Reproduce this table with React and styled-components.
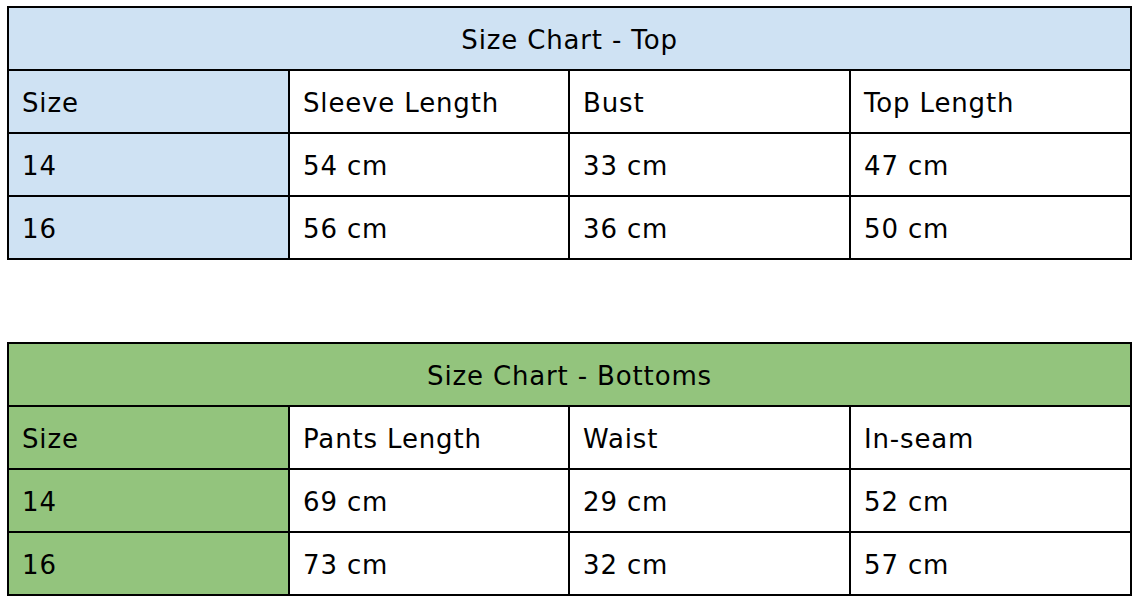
import React from "react";
import styled, { createGlobalStyle } from "styled-components";

const Global = createGlobalStyle`
  html, body { margin: 0; padding: 0; background: #fff; }
  body { font-family: "DejaVu Sans", Verdana, sans-serif; color: #000; }
`;

const Page = styled.div`
  padding: 6px 8px 0 7px;
  display: flex;
  flex-direction: column;
  gap: 82px;
`;

const Table = styled.table`
  width: 1125px;
  border-collapse: separate;
  border-spacing: 0;
  table-layout: fixed;
  border-left: 2px solid #000;
  border-top: 2px solid #000;
`;

const Col = styled.col`
  width: ${(p) => p.$w}px;
`;

const Cell = styled.td`
  box-sizing: border-box;
  height: 63px;
  padding: 3px 0 0 13px;
  border-right: 2px solid #000;
  border-bottom: 2px solid #000;
  background: ${(p) => p.$bg || "#fff"};
  font-size: 26px;
  letter-spacing: 0.85px;
  line-height: 1;
  vertical-align: middle;
  white-space: nowrap;
`;

const TitleCell = styled(Cell)`
  text-align: center;
  padding: 3px 0 0 0;
`;

const colWidths = [281, 280, 281, 281];

const charts = [
  {
    title: "Size Chart - Top",
    color: "#cfe2f3",
    head: ["Sleeve Length", "Bust", "Top Length"],
    rows: [
      ["14", "54 cm", "33 cm", "47 cm"],
      ["16", "56 cm", "36 cm", "50 cm"],
    ],
  },
  {
    title: "Size Chart - Bottoms",
    color: "#93c47d",
    head: ["Pants Length", "Waist", "In-seam"],
    rows: [
      ["14", "69 cm", "29 cm", "52 cm"],
      ["16", "73 cm", "32 cm", "57 cm"],
    ],
  },
];

function Chart({ chart }) {
  return (
    <Table>
      <colgroup>
        {colWidths.map((w, i) => (
          <Col key={i} $w={w} />
        ))}
      </colgroup>
      <tbody>
        <tr>
          <TitleCell colSpan={4} $bg={chart.color}>{chart.title}</TitleCell>
        </tr>
        <tr>
          <Cell $bg={chart.color}>Size</Cell>
          {chart.head.map((h) => (
            <Cell key={h}>{h}</Cell>
          ))}
        </tr>
        {chart.rows.map((r) => (
          <tr key={r[0]}>
            {r.map((v, i) => (
              <Cell key={i} $bg={i === 0 ? chart.color : undefined}>{v}</Cell>
            ))}
          </tr>
        ))}
      </tbody>
    </Table>
  );
}

export default function App() {
  return (
    <>
      <Global />
      <Page>
        {charts.map((c) => (
          <Chart key={c.title} chart={c} />
        ))}
      </Page>
    </>
  );
}
